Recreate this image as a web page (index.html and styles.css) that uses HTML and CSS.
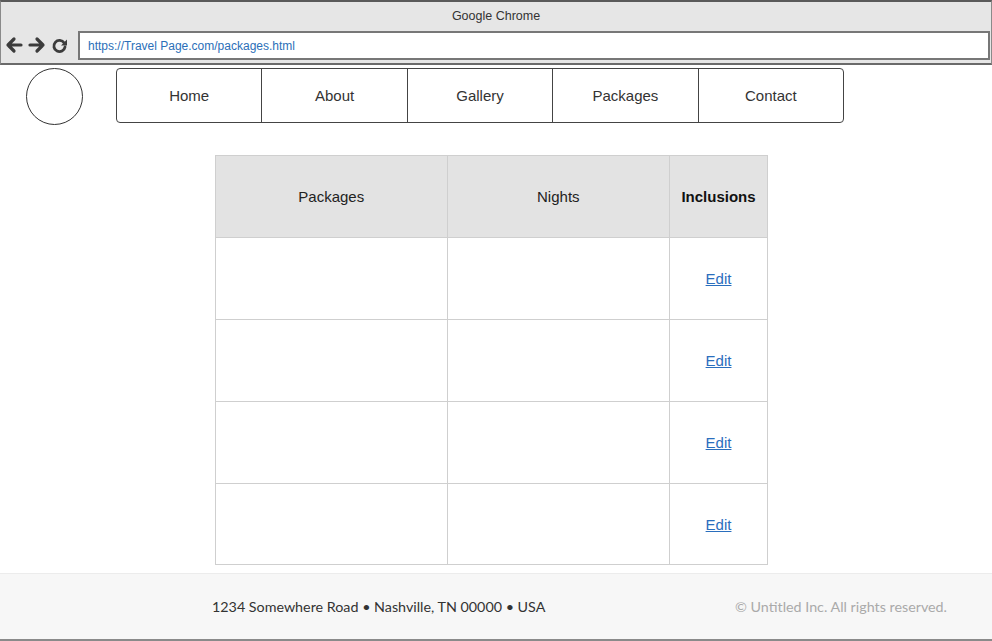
FILE: index.html
```html
<!DOCTYPE html>
<html>
<head>
<meta charset="utf-8">
<title>Packages</title>
<link rel="stylesheet" href="styles.css">
</head>
<body>
<div class="chrome">
  <div class="title">Google Chrome</div>
  <div class="addr-row">
    <div class="nav-icons">
      <svg width="18" height="18" viewBox="0 0 18 18"><path d="M16 9H3M9 3L3 9l6 6" fill="none" stroke="#3c3c3c" stroke-width="3.2" stroke-linecap="round" stroke-linejoin="round"/></svg>
      <svg width="18" height="18" viewBox="0 0 18 18"><path d="M2 9h13M9 3l6 6-6 6" fill="none" stroke="#3c3c3c" stroke-width="3.2" stroke-linecap="round" stroke-linejoin="round"/></svg>
      <svg width="17" height="17" viewBox="0 0 17 17"><path d="M13.2 6A5.6 5.6 0 1 0 14 10" fill="none" stroke="#3c3c3c" stroke-width="2.8" stroke-linecap="round"/><path d="M16 2.5v6h-6z" fill="#3c3c3c"/></svg>
    </div>
    <div class="addr">https://Travel Page.com/packages.html</div>
  </div>
</div>

<header class="site-header">
  <div class="logo"></div>
  <nav class="menu">
    <a class="menu-item">Home</a>
    <a class="menu-item">About</a>
    <a class="menu-item">Gallery</a>
    <a class="menu-item">Packages</a>
    <a class="menu-item">Contact</a>
  </nav>
</header>

<main class="content">
  <table class="pkg">
    <thead>
      <tr><th class="c1">Packages</th><th class="c2">Nights</th><th class="c3 bold">Inclusions</th></tr>
    </thead>
    <tbody>
      <tr><td></td><td></td><td class="center"><a href="#">Edit</a></td></tr>
      <tr><td></td><td></td><td class="center"><a href="#">Edit</a></td></tr>
      <tr><td></td><td></td><td class="center"><a href="#">Edit</a></td></tr>
      <tr class="last"><td></td><td></td><td class="center"><a href="#">Edit</a></td></tr>
    </tbody>
  </table>
</main>

<footer class="footer">
  <span class="address">1234 Somewhere Road • Nashville, TN 00000 • USA</span>
  <span class="copy">© Untitled Inc. All rights reserved.</span>
</footer>
</body>
</html>
```
FILE: styles.css
```css
* { box-sizing: border-box; }
html, body { margin: 0; padding: 0; }
body {
  width: 992px;
  height: 641px;
  overflow: hidden;
  background: #fff;
  font-family: "Liberation Sans", Arial, sans-serif;
  color: #333;
}
.chrome {
  height: 65px;
  background: #e6e6e6;
  border-top: 2px solid #5a5a5a;
  border-bottom: 2px solid #6a6a6a;
  border-left: 1px solid #8a8a8a;
  border-right: 1px solid #8a8a8a;
}
.title {
  height: 28px;
  text-align: center;
  font-size: 12.5px;
  line-height: 29px;
  color: #333;
}
.addr-row {
  display: flex;
  align-items: center;
  height: 30px;
}
.nav-icons {
  display: flex;
  align-items: center;
  gap: 5px;
  padding-left: 4px;
  width: 77px;
}
.addr {
  flex: 1;
  margin-right: 1px;
  height: 29px;
  background: #fff;
  border: 2px solid #777;
  font-size: 12px;
  line-height: 26px;
  padding-left: 8px;
  color: #2b6fb8;
}
.site-header {
  display: flex;
  align-items: flex-start;
  padding: 3px 0 0 26px;
  gap: 33px;
}
.logo {
  width: 57px;
  height: 57px;
  border: 1.5px solid #333;
  border-radius: 50%;
}
.menu {
  display: flex;
  width: 728px;
  height: 55px;
  border: 1px solid #444;
  border-radius: 4px;
}
.menu-item {
  flex: 1;
  display: flex;
  align-items: center;
  justify-content: center;
  font-size: 15px;
  color: #333;
  border-left: 1px solid #444;
}
.menu-item:first-child { border-left: none; }
.content {
  padding: 30px 0 0 215px;
}
.pkg {
  border-collapse: collapse;
  width: 553px;
  font-size: 15px;
}
.pkg th, .pkg td {
  border: 1px solid #cfcfcf;
  height: 82px;
  padding: 0;
  text-align: center;
  font-weight: normal;
  color: #222;
}
.pkg tr.last td { height: 81px; }
.pkg th { background: #e3e3e3; }
.pkg th.bold { font-weight: bold; color: #111; }
.c1 { width: 232px; }
.c2 { width: 223px; }
.c3 { width: 98px; }
.pkg a { color: #2a6ebd; text-decoration: underline; }
.footer {
  position: absolute;
  left: 0;
  top: 573px;
  width: 992px;
  height: 68px;
  background: #f7f7f7;
  border-top: 1px solid #ececec;
  border-bottom: 2px solid #8a8a8a;
  display: flex;
  align-items: center;
  justify-content: space-between;
  padding: 0 45px 0 212px;
  font-family: Lato, "Open Sans", sans-serif;
  font-size: 14.3px;
}
.address { color: #333; }
.copy { color: #aaa; }
```
